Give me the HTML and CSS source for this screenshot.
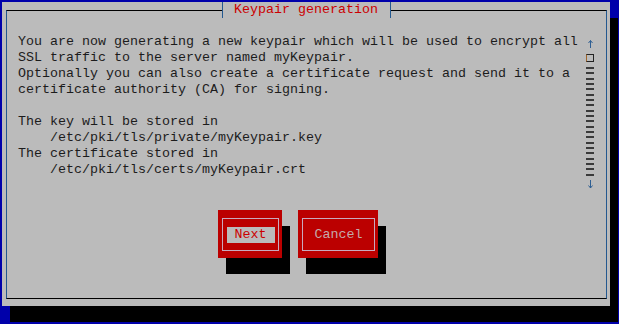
FILE: index.html
```html
<!DOCTYPE html>
<html lang="en">
<head>
    <meta charset="UTF-8">
    <title>Keypair generation</title>
    <link rel="stylesheet" href="styles.css">
</head>
<body>
    <div class="screen">
        <div class="dialog">
            <div class="frame">
                <div class="title">Keypair generation</div>

                <div class="content">
                    <div class="message">You are now generating a new keypair which will be used to encrypt all
SSL traffic to the server named myKeypair.
Optionally you can also create a certificate request and send it to a
certificate authority (CA) for signing.

The key will be stored in
    /etc/pki/tls/private/myKeypair.key
The certificate stored in
    /etc/pki/tls/certs/myKeypair.crt</div>

                    <div class="scroll">
                        <div class="scroll-cell">
                            <svg width="8" height="16" viewBox="0 0 8 16"><path d="M4.5 6.5 V14 M2.5 9 L4.5 6.5 L6.5 9" fill="none" stroke="#2f5f93" stroke-width="1"/></svg>
                        </div>
                        <div class="scroll-cell">
                            <div class="thumb"></div>
                        </div>
                        <div class="track"></div>
                        <div class="scroll-cell">
                            <svg width="8" height="16" viewBox="0 0 8 16"><path d="M4.5 2 V10 M2.5 7.5 L4.5 10 L6.5 7.5" fill="none" stroke="#2f5f93" stroke-width="1"/></svg>
                        </div>
                    </div>
                </div>

                <div class="buttons">
                    <div class="button next">
                        <div class="button-frame"><span class="label focused">Next</span></div>
                    </div>
                    <div class="button cancel">
                        <div class="button-frame"><span class="label">Cancel</span></div>
                    </div>
                </div>
            </div>
        </div>
    </div>
</body>
</html>
```

FILE: styles.css
```css
:root {
    --blue: #0000aa;
    --gray: #bbbbbb;
    --red: #bb0000;
    --title-red: #cc0000;
    --text: #1c1c1c;
    --vline: #23588f;
}

* {
    margin: 0;
    padding: 0;
    box-sizing: border-box;
}

body {
    width: 619px;
    height: 324px;
    background: var(--blue);
    font-family: 'Liberation Mono', 'DejaVu Sans Mono', monospace;
    font-size: 13.333px;
    line-height: 16px;
    color: var(--text);
    overflow: hidden;
}

.screen {
    padding: 2px;
}

/* Dialog box with its terminal shadow */
.dialog {
    width: 608px;
    height: 304px;
    background: var(--gray);
    padding: 8px 3px 7px 4px;
    box-shadow: 8px 16px 0 #000;
}

.frame {
    position: relative;
    height: 100%;
    border: 1px solid #000;
    border-left-color: var(--vline);
    border-right-color: var(--vline);
    padding: 23px 0 0 11px;
}

.title {
    position: absolute;
    top: -9px;
    left: 215px;
    height: 16px;
    padding: 0 12px 0 11px;
    background: var(--gray);
    color: var(--title-red);
    border-left: 1px solid var(--vline);
    border-right: 1px solid var(--vline);
}

.content {
    display: flex;
    gap: 8px;
}

.message {
    width: 560px;
    white-space: pre;
}

/* Scroll indicator */
.scroll {
    width: 8px;
    display: flex;
    flex-direction: column;
}

.scroll-cell {
    height: 16px;
    display: flex;
    align-items: center;
    justify-content: center;
}

.scroll-cell svg {
    display: block;
}

.thumb {
    width: 8px;
    height: 8px;
    border: 1px solid #222;
    border-left-color: #a0662a;
}

.track {
    height: 112px;
    background: repeating-linear-gradient(to bottom, #3a3a3a 0, #3a3a3a 2px, transparent 2px, transparent 5.333px);
    background-position: 0 1px;
}

/* Buttons */
.buttons {
    display: flex;
    gap: 16px;
    margin: 16px 0 0 200px;
}

.button {
    height: 48px;
    background: var(--red);
    padding: 8px 3px 7px 4px;
    box-shadow: 8px 16px 0 #000;
}

.button.next {
    width: 64px;
}

.button.cancel {
    width: 80px;
}

.button-frame {
    height: 100%;
    border: 1px solid #c9a9bd;
    display: flex;
    align-items: center;
    justify-content: center;
}

.label {
    padding: 0 8px;
    height: 16px;
    color: #c4aaaa;
}

.label.focused {
    background: var(--gray);
    color: var(--title-red);
}
```
